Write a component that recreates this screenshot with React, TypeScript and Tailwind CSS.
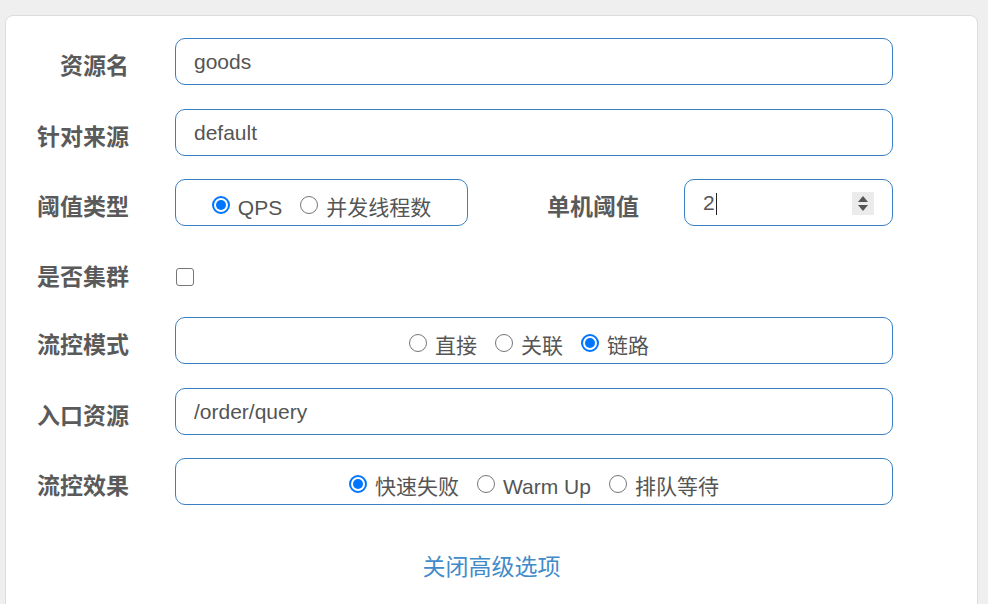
import React from "react";

const font = "font-['Liberation_Sans','Noto_Sans_CJK_SC',sans-serif]";

function Label({ children, className = "" }: { children: React.ReactNode; className?: string }) {
    return (
        <div className={`flex items-center justify-end h-[47px] pt-[9px] text-[23px] font-bold text-[#5a5a5a] ${className}`}>
            {children}
        </div>
    );
}

function Radio({ checked, label }: { checked?: boolean; label: string }) {
    return (
        <label className="flex items-center">
            {checked ? (
                <span className="w-[18px] h-[18px] mb-[5px] mr-[8px] rounded-full border-2 border-[#0075ff] flex items-center justify-center">
                    <span className="w-[10px] h-[10px] rounded-full bg-[#0075ff]" />
                </span>
            ) : (
                <span className="w-[18px] h-[18px] mb-[5px] mr-[8px] rounded-full border-[1.5px] border-[#767676]" />
            )}
            <span>{label}</span>
        </label>
    );
}

function RadioBox({ options, checked, className = "" }: { options: string[]; checked: number; className?: string }) {
    return (
        <div className={`h-[47px] border border-[#3a7fc1] rounded-[10px] flex items-center justify-center gap-[18px] pt-[10px] text-[21px] text-[#555] ${className}`}>
            {options.map((o, i) => (
                <Radio key={o} label={o} checked={i === checked} />
            ))}
        </div>
    );
}

function TextBox({ value }: { value: string }) {
    return (
        <div className="flex-1 h-[47px] border border-[#3a7fc1] rounded-[10px] flex items-center pl-[18px] text-[21px] text-[#555]">
            {value}
        </div>
    );
}

export default function App() {
    return (
        <div className={`min-h-[604px] bg-[#efefef] pt-[15px] pl-[5px] pr-[10px] ${font}`}>
            <div className="bg-white border border-[#dddddd] rounded-[8px] h-[600px] pt-[22px] pr-[84px]">
                {/* 资源名 */}
                <div className="flex gap-[46px]">
                    <Label className="w-[123px]">资源名</Label>
                    <TextBox value="goods" />
                </div>

                {/* 针对来源 */}
                <div className="flex gap-[46px] mt-[24px]">
                    <Label className="w-[123px]">针对来源</Label>
                    <TextBox value="default" />
                </div>

                {/* 阈值类型 + 单机阈值 */}
                <div className="flex mt-[23px]">
                    <Label className="w-[123px]">阈值类型</Label>
                    <RadioBox options={["QPS", "并发线程数"]} checked={0} className="ml-[46px] w-[293px]" />
                    <Label className="flex-1">单机阈值</Label>
                    <div className="ml-[45px] w-[209px] h-[47px] border border-[#3a7fc1] rounded-[10px] flex items-center pl-[18px] pr-[18px] text-[21px] text-[#555]">
                        <span>2</span>
                        <span className="w-[1.5px] h-[22px] bg-[#222] ml-[1px] mt-[2px]" />
                        <div className="ml-auto w-[22px] h-[23px] bg-[#ebebeb] flex flex-col items-center justify-center gap-[3px] mt-[1px]">
                            <svg width="10" height="6" viewBox="0 0 10 6"><path d="M0 6 L5 0 L10 6 Z" fill="#555" /></svg>
                            <svg width="10" height="6" viewBox="0 0 10 6"><path d="M0 0 L5 6 L10 0 Z" fill="#555" /></svg>
                        </div>
                    </div>
                </div>

                {/* 是否集群 */}
                <div className="flex gap-[46px] mt-[23px] h-[45px] items-center">
                    <Label className="w-[123px] h-[45px] pt-[11px]">是否集群</Label>
                    <div className="flex items-center h-[45px] pt-[11px]">
                        <span className="w-[18px] h-[18px] ml-[1px] rounded-[3px] border-[1.5px] border-[#767676]" />
                    </div>
                </div>

                {/* 流控模式 */}
                <div className="flex gap-[46px] mt-[23px]">
                    <Label className="w-[123px]">流控模式</Label>
                    <RadioBox options={["直接", "关联", "链路"]} checked={2} className="flex-1 pr-[10px]" />
                </div>

                {/* 入口资源 */}
                <div className="flex gap-[46px] mt-[24px]">
                    <Label className="w-[123px]">入口资源</Label>
                    <TextBox value="/order/query" />
                </div>

                {/* 流控效果 */}
                <div className="flex gap-[46px] mt-[23px]">
                    <Label className="w-[123px]">流控效果</Label>
                    <RadioBox options={["快速失败", "Warm Up", "排队等待"]} checked={0} className="flex-1" />
                </div>

                <div className="mt-[46px] pl-[84px] text-center">
                    <a href="#" className="text-[23px] leading-[32px] text-[#428bca]">关闭高级选项</a>
                </div>
            </div>
        </div>
    );
}
